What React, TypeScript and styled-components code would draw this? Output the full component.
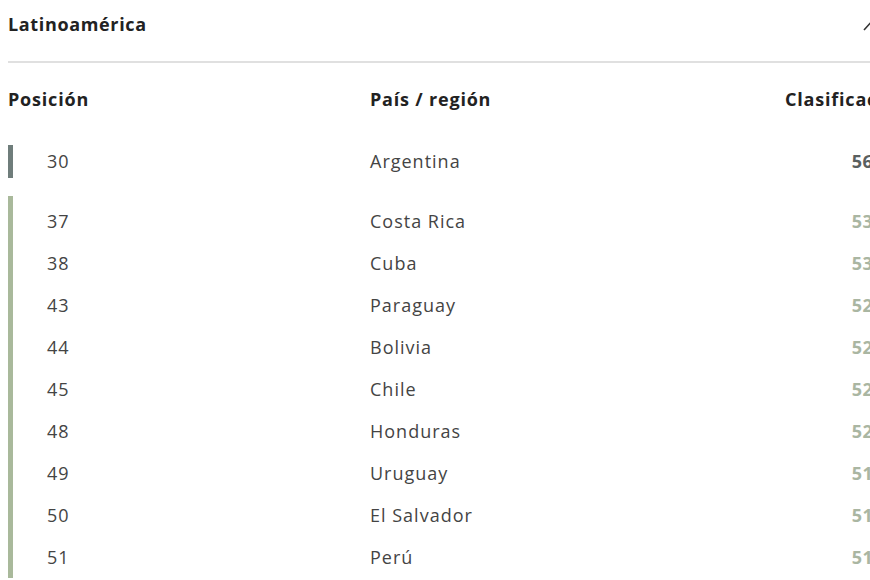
import styled, { createGlobalStyle } from "styled-components";

type Country = { pos: number; name: string; score: string };

const leaders: Country[] = [{ pos: 30, name: "Argentina", score: "56,04" }];

const others: Country[] = [
  { pos: 37, name: "Costa Rica", score: "53,78" },
  { pos: 38, name: "Cuba", score: "53,46" },
  { pos: 43, name: "Paraguay", score: "52,64" },
  { pos: 44, name: "Bolivia", score: "52,48" },
  { pos: 45, name: "Chile", score: "52,33" },
  { pos: 48, name: "Honduras", score: "52,01" },
  { pos: 49, name: "Uruguay", score: "51,93" },
  { pos: 50, name: "El Salvador", score: "51,84" },
  { pos: 51, name: "Perú", score: "51,62" },
];

const GlobalStyle = createGlobalStyle`
  html, body {
    margin: 0;
    padding: 0;
    background: #ffffff;
    overflow: hidden;
  }
  body {
    font-family: "Open Sans", "Liberation Sans", sans-serif;
    color: #333;
  }
`;

const ChevronUp = () => (
  <svg width="20" height="13" viewBox="0 0 20 13" fill="none">
    <path d="M1 12 L10 2 L19 12" stroke="#333" strokeWidth="1.6" />
  </svg>
);

const RankRow = ({ item, muted }: { item: Country; muted: boolean }) => (
  <Row>
    <Position>{item.pos}</Position>
    <CountryName>{item.name}</CountryName>
    <Score $muted={muted}>{item.score}</Score>
  </Row>
);

const App = () => {
  return (
    <Page>
      <GlobalStyle />
      <TitleRow>
        <Title>Latinoamérica</Title>
        <ChevronUp />
      </TitleRow>
      <Divider />
      <HeaderRow>
        <HeaderCell>Posición</HeaderCell>
        <HeaderCell>País / región</HeaderCell>
        <HeaderCell>Clasificación</HeaderCell>
      </HeaderRow>
      <Groups>
        <Group $pad={0}>
          <Bar $color="#6f7d7b" $inset="5px 0 4px" />
          <Rows>
            {leaders.map((c) => (
              <RankRow key={c.pos} item={c} muted={false} />
            ))}
          </Rows>
        </Group>
        <Group $pad={4}>
          <Bar $color="#a9b99b" $inset="-4px 0 0" />
          <Rows>
            {others.map((c) => (
              <RankRow key={c.pos} item={c} muted />
            ))}
          </Rows>
        </Group>
      </Groups>
    </Page>
  );
};

const Page = styled.div`
  width: 893px;
  padding-left: 8px;
`;

const TitleRow = styled.div`
  height: 48px;
  display: flex;
  align-items: center;
  justify-content: space-between;
  padding-right: 18px;

  svg {
    margin-top: 1px;
  }
`;

const Title = styled.h2`
  margin: 0;
  font-size: 18px;
  font-weight: 700;
  letter-spacing: 0.65px;
  color: #222;
`;

const Divider = styled.div`
  margin-top: 13px;
  height: 2px;
  background: #e0e0e0;
`;

const HeaderRow = styled.div`
  margin-top: 18px;
  height: 36px;
  display: grid;
  grid-template-columns: 362px 415px 1fr;
  align-items: center;
`;

const HeaderCell = styled.div`
  font-size: 18px;
  font-weight: 700;
  letter-spacing: 0.8px;
  color: #222;
  white-space: nowrap;
`;

const Groups = styled.div`
  margin-top: 23px;
  display: flex;
  flex-direction: column;
  gap: 14px;
`;

const Group = styled.div<{ $pad: number }>`
  display: flex;
  padding-top: ${(p) => p.$pad}px;
`;

const Bar = styled.div<{ $color: string; $inset: string }>`
  width: 5px;
  flex-shrink: 0;
  background: ${(p) => p.$color};
  margin: ${(p) => p.$inset};
`;

const Rows = styled.div`
  flex: 1;
  display: flex;
  flex-direction: column;
`;

const Row = styled.div`
  height: 42px;
  display: grid;
  grid-template-columns: 357px 1fr auto;
  align-items: center;
`;

const Position = styled.span`
  padding-left: 34px;
  font-size: 18px;
  letter-spacing: 1px;
  color: #444;
`;

const CountryName = styled.span`
  font-size: 18px;
  letter-spacing: 1px;
  color: #444;
`;

const Score = styled.span<{ $muted: boolean }>`
  font-size: 18px;
  font-weight: 700;
  letter-spacing: 0.6px;
  color: ${(p) => (p.$muted ? "#aab6a2" : "#5a605f")};
  text-align: right;
`;

export default App;
